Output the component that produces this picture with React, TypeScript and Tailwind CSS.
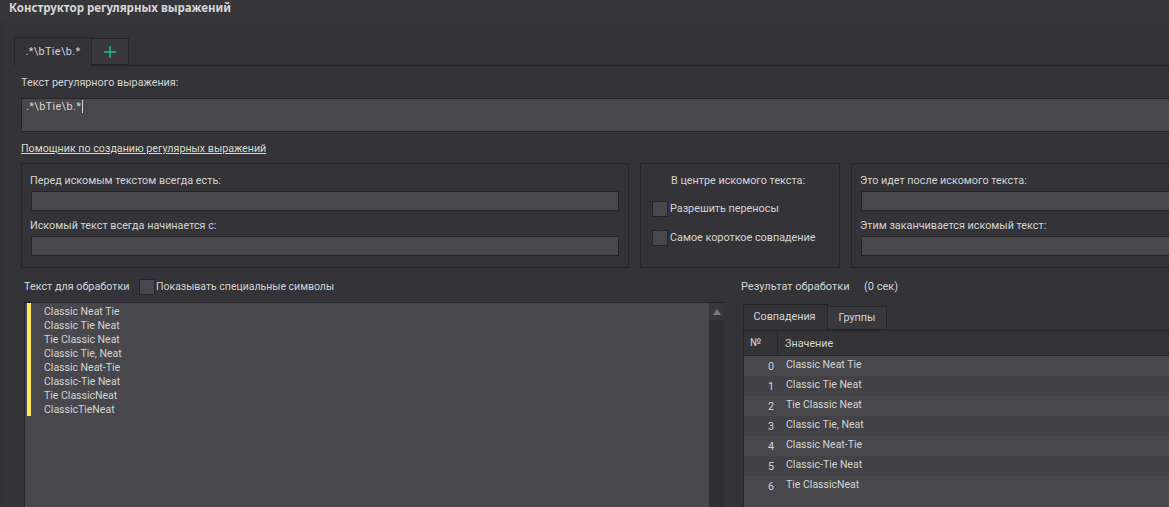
const sourceLines = [
  'Classic Neat Tie',
  'Classic Tie Neat',
  'Tie Classic Neat',
  'Classic Tie, Neat',
  'Classic Neat-Tie',
  'Classic-Tie Neat',
  'Tie ClassicNeat',
  'ClassicTieNeat',
]

function Field({ label, className = '' }: { label: string; className?: string }) {
  return (
    <div className={className}>
      <div className="-ml-px h-[17px] leading-[19px]">{label}</div>
      <div className="mt-[3px] h-5 border border-[#26262a] bg-[#47474c]" />
    </div>
  )
}

function Check({ label, className = '' }: { label: string; className?: string }) {
  return (
    <div className={`flex items-center whitespace-nowrap ${className}`}>
      <div className="h-4 w-4 border border-[#26262a] bg-[#47474c]" />
      <span className="ml-[2px]">{label}</span>
    </div>
  )
}

export default function App() {
  return (
    <div className="h-[507px] w-[1169px] overflow-hidden bg-[#333338] font-['Roboto','Liberation_Sans',sans-serif] text-[10.8px] text-[#d5d5d5]">
      <div className="h-[23px] bg-[#37373b] pl-[9px] font-['Noto_Sans',sans-serif] text-[11.5px] leading-[15px] font-bold text-[#d8d8d8]">
        Конструктор регулярных выражений
      </div>
      <div className="ml-[1px] h-[484px] border-l border-[#2d2d31] pl-[12px] pt-[14px]">
        <div className="flex h-[29px] border-b border-[#26262a]">
          <div className="flex h-[29px] w-[78px] items-center justify-center border border-b-0 border-[#26262a] bg-[#333338] tracking-[0.4px]">
            .*\bTie\b.*
          </div>
          <div className="mt-[1px] flex h-[27px] w-[37px] items-center justify-center border border-l-0 border-[#26262a] bg-[#38383d]">
            <svg width="14" height="14" viewBox="0 0 14 14">
              <path d="M7 1v12M1 7h12" stroke="#1fb894" strokeWidth="1.6" />
            </svg>
          </div>
        </div>

        <div className="pl-[7px]">
          <div className="mt-[7px] h-[17px] leading-[19px]">Текст регулярного выражения:</div>
          <div className="mt-[8px] h-[34px] w-[1160px] border border-[#26262a] bg-[#47474c] pl-[4px] leading-[15px] tracking-[0.4px]">
            <span className="border-r border-[#d5d5d5] pr-px">.*\bTie\b.*</span>
          </div>
          <div className="mt-[7px] h-[17px] text-[10.7px] leading-[19px] text-[#dcdcc8] underline">
            Помощник по созданию регулярных выражений
          </div>

          <div className="mt-[7px] flex h-[105px] w-[1200px]">
            <div className="w-[608px] border border-[#26262a] px-[9px] pt-[7px]">
              <Field label="Перед искомым текстом всегда есть:" />
              <Field label="Искомый текст всегда начинается с:" className="mt-[5px]" />
            </div>
            <div className="ml-[11px] w-[200px] border border-[#26262a] pt-[7px]">
              <div className="h-[17px] pl-[30px] leading-[19px]">В центре искомого текста:</div>
              <Check label="Разрешить переносы" className="ml-[11px] mt-[13px]" />
              <Check label="Самое короткое совпадение" className="ml-[11px] mt-[13px]" />
            </div>
            <div className="ml-[11px] w-[340px] border border-[#26262a] px-[9px] pt-[7px]">
              <Field label="Это идет после искомого текста:" />
              <Field label="Этим заканчивается искомый текст:" className="mt-[5px]" />
            </div>
          </div>
        </div>

        <div className="mt-[11px] flex">
          <div className="ml-[10px] w-[700px]">
            <div className="flex h-4 items-center">
              <span className="w-[115px]">Текст для обработки</span>
              <div className="h-4 w-4 border border-[#26262a] bg-[#47474c]" />
              <span className="ml-[1px] text-[10.5px]">Показывать специальные символы</span>
            </div>
            <div className="mt-[7px] flex h-[205px] border-l border-t border-[#26262a] bg-[#47474c]">
              <div className="flex-1 pl-[2px]">
                <div className="border-l-4 border-[#ffe95a] pl-[13px] pt-px text-[10.5px]">
                  {sourceLines.map((line) => (
                    <div key={line} className="h-[14px] leading-[16px]">
                      {line}
                    </div>
                  ))}
                </div>
              </div>
              <div className="w-[15px] bg-[#2f2f33]">
                <div className="flex h-[17px] items-center justify-center bg-[#38383c]">
                  <div className="h-0 w-0 border-x-[4px] border-b-[6px] border-x-transparent border-b-[#7a7a80]" />
                </div>
              </div>
            </div>
          </div>

          <div className="ml-[17px] flex-1">
            <div className="flex h-4 items-center text-[11px]">
              <span className="w-[123px]">Результат обработки</span>
              <span>(0 сек)</span>
            </div>
            <div className="mt-[9px] flex h-[27px] border-b border-[#26262a] pl-[2px]">
              <div className="flex h-[27px] w-[85px] items-center justify-center border border-b-0 border-[#26262a] pb-px pr-[2px]">
                Совпадения
              </div>
              <div className="mt-[2px] flex h-[24px] w-[59px] items-center justify-center border border-l-0 border-[#26262a] bg-[#38383d]">
                Группы
              </div>
            </div>
            <div className="ml-[2px] h-[177px] border-l border-[#26262a] bg-[#47474c]">
              <div className="flex h-[25px] items-center border-b border-[#26262a] bg-[#333338]">
                <div className="flex h-full w-[34px] items-center border-r border-[#26262a] pl-[6px]">№</div>
                <div className="mt-[2px] pl-[7px]">Значение</div>
              </div>
              {sourceLines.slice(0, 7).map((line, i) => (
                <div
                  key={line}
                  className={`flex h-5 items-center ${i % 2 === 0 ? 'bg-[#47474c]' : 'bg-[#424247]'}`}
                >
                  <div className="mt-[2px] w-[30px] text-right">{i}</div>
                  <div className="-mt-[2px] ml-[12px] text-[10.5px]">{line}</div>
                </div>
              ))}
            </div>
          </div>
        </div>
      </div>
    </div>
  )
}
